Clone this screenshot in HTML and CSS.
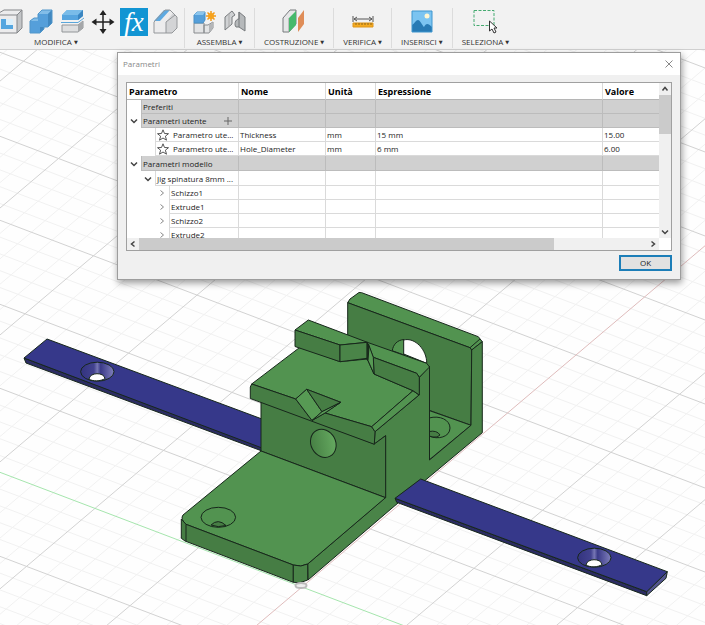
FILE: index.html
```html
<!DOCTYPE html>
<html lang="it">
<head>
<meta charset="utf-8">
<meta name="viewport" content="width=device-width, initial-scale=1">
<title>Parametri</title>
<link rel="stylesheet" href="styles.css">
</head>
<body>
<svg class="sprite" aria-hidden="true">
  <symbol id="down" viewBox="0 0 10 10"><path d="M2 3.5 5 6.5 8 3.5"/></symbol>
  <symbol id="up" viewBox="0 0 10 10"><path d="M2.500 6.500 5 3.500 7.500 6.500"/></symbol>
  <symbol id="right" viewBox="0 0 10 10"><path d="M3.500 2.500 6.500 5 3.500 7.500"/></symbol>
  <symbol id="left" viewBox="0 0 10 10"><path d="M6.500 2.500 3.500 5 6.500 7.500"/></symbol>
  <symbol id="star" viewBox="0 0 12 12"><path d="M6 .8 7.500 4.500 11.500 4.700 8.400 7.200 9.500 11.200 6 9 2.500 11.200 3.600 7.200 .5 4.700 4.500 4.500Z"/></symbol>
</svg>

<header class="toolbar">
  <section class="group first">
    <div class="icons">
      <button class="tool" aria-label="Svuota"><svg width="24" height="28" viewBox="4 0 24 28">
        <path d="M0 7 8 2H26V20L21 25H0Z" fill="#ececed"/><path d="M21 7 26 2V20L21 25Z" fill="#c3c5c7"/><path d="M5 11H17V21H5Z" fill="#fff"/><path d="M5 11H10V17H17V21H5Z" fill="#55a6df"/><path d="M10 11H17V17H10Z" fill="#dceffa"/>
        <path d="M0 7H21V25H0M21 7 26 2V20L21 25M3 5 8 2H26" fill="none" stroke="#85878a"/></svg></button>
      <button class="tool" aria-label="Combina"><svg width="28" height="28" viewBox="0 0 28 28">
        <path d="M3 13 7 10H11V6L15 2H25V15L21 19H17V21L13 25H3Z" fill="#559fda"/><path d="M11 6 15 2H25L21 6ZM3 13 7 10H11V13Z" fill="#82bde8"/><path d="M21 6 25 2V15L21 19ZM13 24V19H17V21Z" fill="#4188c0"/><path d="M3 13 7 10H11V6L15 2H25V15L21 19H17V21L13 25H3Z" fill="none" stroke="#5096ca"/></svg></button>
      <button class="tool" aria-label="Dividi corpo"><svg width="28" height="28" viewBox="0 0 28 28">
        <path d="M4 7 9 2H25V8L20 12H4Z" fill="#56a5df"/><path d="M4 7 9 2H25L20 7Z" fill="#79bce9"/><path d="M20 7 25 2V8L20 12Z" fill="#3a86c1"/><path d="M3 14.500H20L26 10" stroke="#5aa6da" fill="none"/><path d="M4 17H20L25 13V20L20 24H4Z" fill="#dedfe0" stroke="#929598"/><path d="M20 17 25 13V20L20 24Z" fill="#a5a7a9"/></svg></button>
      <button class="tool" aria-label="Sposta"><svg width="28" height="28" viewBox="0 0 28 28">
        <path d="M14 5V23M5 14H23" stroke="#222" stroke-width="1.500"/><path d="M14 2 10.500 7H17.500ZM14 26 10.500 21H17.500ZM2.500 14 7.500 10.500V17.500ZM25.500 14 20.500 10.500V17.500Z" fill="#222"/></svg></button>
      <button class="tool active" aria-label="Modifica parametri"><i>fx</i></button>
      <button class="tool" aria-label="Smusso"><svg width="28" height="28" viewBox="0 0 28 28">
        <path d="M3 14 14 2H19L26 9V20L21 25H3Z" fill="#ececed"/><path d="M15 14 22 5 26 9V20L21 25H15Z" fill="#d3d4d6"/><path d="M3 13 13 2H19L9 13Z" fill="#5ca9e1"/><path d="M3 14 14 2H19L26 9V20L21 25H3ZM15 25V14L24 7" fill="none" stroke="#94979a"/></svg></button>
    </div>
    <button class="menu">MODIFICA<span>▼</span></button>
  </section>
  <section class="group pair">
    <div class="icons">
      <button class="tool" aria-label="Nuovo componente"><svg width="28" height="28" viewBox="0 0 28 28">
        <path d="M4 15H14V25H4ZM14 17H18L23 14V20L19 25H14Z" fill="#e3e4e5" stroke="#888b8e"/><path d="M19 17 23 14V20L19 25Z" fill="#b4b6b8"/><path d="M4 7 7 4H15V12L13 15H4Z" fill="#559fda" stroke="#4a90c5"/><path d="M4 7 7 4H15L13 7Z" fill="#8bc5ed"/><path d="M21 3V13M16 8H26M17.500 4.500 24.500 11.500M24.500 4.500 17.500 11.500" stroke="#f49b18" stroke-width="1.500"/><circle cx="21" cy="8" r="3" fill="#f6a31e"/></svg></button>
      <button class="tool" aria-label="Giunto"><svg width="28" height="28" viewBox="0 0 28 28">
        <path d="M4 9 11 3 14 7 11 9V16L4 22Z" fill="#d0d2d4" stroke="#777a7d"/><path d="M8 6V19" stroke="#aaa"/><path d="M18 4 24 9V23L18 19H15C13 17 14 11 18 11Z" fill="#b6b9bb" stroke="#777a7d"/><path d="M18 4V19" stroke="#777a7d"/></svg></button>
    </div>
    <button class="menu">ASSEMBLA<span>▼</span></button>
  </section>
  <section class="group">
    <div class="icons">
      <button class="tool" aria-label="Piano di offset"><svg width="28" height="28" viewBox="0 0 28 28">
        <path d="M3 10 10 2H16V16L9 24H3Z" fill="#e6e7e8" stroke="#777a7d"/><path d="M9 10V24" fill="none" stroke="#999"/><path d="M9 10 16 3V17L9 24Z" fill="#46b96c"/><path d="M18 10 24 2V16L18 24Z" fill="#df8d58"/></svg></button>
    </div>
    <button class="menu">COSTRUZIONE<span>▼</span></button>
  </section>
  <section class="group">
    <div class="icons">
      <button class="tool" aria-label="Misura"><svg width="28" height="28" viewBox="0 0 28 28">
        <path d="M4 8V14M24 8V14M5 11H23M8 9 5 11 8 13M20 9 23 11 20 13" fill="none" stroke="#555"/><path d="M4 15H24V19H4Z" fill="#f5ab20" stroke="#dd951b"/><path d="M7 15V17M10 15V17M13 15V17M16 15V17M19 15V17M22 15V17" stroke="#8c651c"/></svg></button>
    </div>
    <button class="menu">VERIFICA<span>▼</span></button>
  </section>
  <section class="group">
    <div class="icons">
      <button class="tool" aria-label="Inserisci immagine"><svg width="28" height="28" viewBox="0 0 28 28">
        <path d="M4 3H24V24H4Z" fill="#7bc4f1"/><path d="M4 17C7 15 8 12 10 12S14 17 16 19C18 15 20 15 24 19V24H4Z" fill="#277ab4"/><circle cx="19" cy="8" r="2.500" fill="#fff6d2"/><path d="M4 3H24V24H4Z" fill="none" stroke="#3f96cf"/></svg></button>
    </div>
    <button class="menu">INSERISCI<span>▼</span></button>
  </section>
  <section class="group">
    <div class="icons">
      <button class="tool" aria-label="Seleziona"><svg width="28" height="28" viewBox="0 0 28 28">
        <path d="M3 2.500H23V17.500H3Z" fill="none" stroke="#45aa70" stroke-dasharray="3 1.500"/><path d="M18.500 13V23L21 21 23 25 25 24 23 20H26Z" fill="#fff" stroke="#333"/></svg></button>
    </div>
    <button class="menu">SELEZIONA<span>▼</span></button>
  </section>
</header>

<main class="workspace">
  <svg class="scene" viewBox="0 50 705 575" preserveAspectRatio="xMidYMin slice" role="img" aria-label="Modello 3D della dima">
    <defs>
      <linearGradient id="cone"><stop offset="0" stop-color="#33337f"/><stop offset=".4" stop-color="#42428f"/><stop offset=".5" stop-color="#7676b4"/><stop offset=".6" stop-color="#3a3a88"/><stop offset="1" stop-color="#8080bc"/></linearGradient>
      <linearGradient id="bore" x2="1" y2=".4"><stop offset="0" stop-color="#427a40"/><stop offset="1" stop-color="#63a65e"/></linearGradient>
    </defs>
    <g class="floor" transform="matrix(1.035 .393 .685 -.58 302 587)">
      <path id="minor" class="minor"/>
      <path id="major" class="major"/>
      <path class="axis-y" d="M-700 0H400"/>
      <path class="axis-x" d="M0-200V900"/>
    </g>

    <g class="edges">
      <path class="steel-dark" d="M24 358 26 363 262 451V447Z"/>
      <path class="steel" d="M47 339 262 419V448L24 358Z"/>
      <ellipse cx="97.300" cy="371.700" rx="16.700" ry="9.500" fill="url(#cone)"/>
      <path class="void" d="M89 379C90 372 104 372 105 378.500 101 381.500 92 381.500 89 379Z"/>

      <path class="top" d="M347.700 302.700 350 299 359 292.500 361.700 292.700 478.300 336.700 482.300 341.700 471.700 350 470 347.700Z"/>
      <path class="front" d="M347.700 302.700 470 347.700 471.700 350 471 425.300 347.700 381Z"/>
      <path class="top" d="M392.300 350.700C393 345 397 340 404 339.500V355Z"/>
      <path class="void" d="M403.700 340C415 337 427 350 426.700 363.300L403.700 354Z"/>
      <path class="top" d="M429 410.500 471 425.300 429 460Z"/>
      <path class="top" d="M429 418C440 415 450 420 450 428 450 437 438 440 429 436Z"/>
      <path class="front" d="M429 431.500Q437 430 440 435L437 437Q433 437.500 429 436Z"/>

      <path class="side" d="M375 431.700 419 395 419.300 377.300 429.500 366V460L471 425.300 471.700 350 482.300 341.700V432.700L398 503 308 580 307.700 564 385.500 497.500V435.700L374.300 444Z"/>
      <path class="outline" d="M470 347.700 480 339"/>

      <path class="front" d="M261 400 374.300 444 385.700 435.700V497.700L261 451Z"/>
      <ellipse cx="323.300" cy="443.300" rx="12.300" ry="14.500" transform="rotate(-28 323.300 443.300)" fill="url(#bore)"/>
      <path class="top" d="M300.700 346.700 251.700 384 295.700 399 306.700 389.300 340.700 402.300 325 413 371.700 426.700 413 390.700 374 374 367.300 359 340 361.700Z"/>
      <path class="front" d="M251.700 384 295.700 399 312 420.500 325 413 371.700 426.700 375 431.700 374.300 444.300 250.300 398.500V387Z"/>
      <path class="top" d="M371.700 426.700 413 390.700 419 395 375 431.700Z"/>
      <path class="facet" d="M295.700 399 306.700 389.300 322 411.700 312 420.500Z"/>
      <path class="front" d="M306.700 389.300 340.700 402.300 322 411.700Z"/>
      <path class="facet" d="M312 420.500 322 411.700 340.700 402.300 325 413Z"/>

      <path class="top" d="M308.300 320 295 330 340 345 367.300 342.300Z"/>
      <path class="front" d="M295 330 340 345V361.700L295 346.500Z"/>
      <path class="side" d="M340 345 367.300 342.300V358.300L340 361.700Z"/>
      <path class="top" d="M367.300 342.300 426.700 363.300 429.500 367 419.300 377.300 416.700 373.300 373.300 357.300Z"/>
      <path class="front" d="M373.300 357.300 416.700 373.300 419.300 377.300V395L413 390.700 374 374Z"/>
      <path class="facet" d="M368.500 344 373.300 357.300 374 374 367.300 359Z"/>
      <path class="shadow" d="M367 342.500 369 347 368 360H367Z"/>

      <path class="top" d="M261 451 183 515Q180 519 186 524.300L293.300 565Q301 567.500 307.700 564L385.500 497.700Z"/>
      <path class="front" d="M181.300 519V538.300L185 541 293.300 582.300V565L186 524.300Z"/>
      <path class="outline" d="M186 524.300V541"/>
      <path class="side" d="M293.300 565Q301 567.500 307.700 564V580L300 582.700 293.300 582.300Z"/>
      <ellipse class="top" cx="218.300" cy="517.300" rx="17.300" ry="10"/>
      <path class="front" d="M211 525Q218 518 226 525.500 218 528 211 525Z"/>

      <path class="steel-dark" d="M395 498.300 396.700 502.300 646.700 595.700V591.700Z"/>
      <path class="steel-end" d="M667.300 571.700 666 578.300 646.700 595.700V591.700Z"/>
      <path class="steel" d="M420.700 479 667.300 571.700 646.700 591.700 395 498.300Z"/>
      <ellipse cx="594.300" cy="557.700" rx="16.700" ry="9.500" fill="url(#cone)"/>
      <path class="void" d="M586 565C587 558 601 558 602 564.500 598 567.500 590 567.500 586 565Z"/>
    </g>
    <ellipse class="origin" cx="301" cy="585.500" rx="5.500" ry="2.500"/>
  </svg>

  <section class="dialog" role="dialog" aria-labelledby="dialog-title">
    <div class="titlebar">
      <h1 id="dialog-title">Parametri</h1>
      <button class="close" aria-label="Chiudi"><svg width="10" height="10" viewBox="0 0 10 10"><path d="M1.500 1.500 8.500 8.500M8.500 1.500 1.500 8.500"/></svg></button>
    </div>
    <div class="content">
      <div class="pane">
        <div class="view">
          <table>
            <colgroup><col class="c-param"><col class="c-name"><col class="c-unit"><col class="c-expr"><col></colgroup>
            <thead><tr><th>Parametro</th><th>Nome</th><th>Unità</th><th>Espressione</th><th>Valore</th></tr></thead>
            <tbody>
              <tr class="band"><td><div class="tree"><span class="twist"></span><span class="label">Preferiti</span></div></td><td></td><td></td><td></td><td></td></tr>
              <tr class="band"><td><div class="tree"><button class="twist" aria-label="Comprimi"><svg><use href="#down"/></svg></button><span class="label">Parametri utente</span><button class="add" aria-label="Aggiungi parametro"><svg width="10" height="10" viewBox="0 0 10 10"><path d="M5 1V9M1 5H9"/></svg></button></div></td><td></td><td></td><td></td><td></td></tr>
              <tr><td><div class="tree level1"><span class="twist"></span><span class="label"><svg class="star"><use href="#star"/></svg>Parametro ute...</span></div></td><td>Thickness</td><td>mm</td><td>15 mm</td><td>15.00</td></tr>
              <tr><td><div class="tree level1"><span class="twist"></span><span class="label"><svg class="star"><use href="#star"/></svg>Parametro ute...</span></div></td><td>Hole_Diameter</td><td>mm</td><td>6 mm</td><td>6.00</td></tr>
              <tr class="band tall"><td><div class="tree"><button class="twist" aria-label="Comprimi"><svg><use href="#down"/></svg></button><span class="label">Parametri modello</span></div></td><td></td><td></td><td></td><td></td></tr>
              <tr class="tall"><td><div class="tree level1"><button class="twist" aria-label="Comprimi"><svg><use href="#down"/></svg></button><span class="label">Jig spinatura 8mm ...</span></div></td><td></td><td></td><td></td><td></td></tr>
              <tr><td><div class="tree level2"><button class="twist" aria-label="Espandi"><svg><use href="#right"/></svg></button><span class="label">Schizzo1</span></div></td><td></td><td></td><td></td><td></td></tr>
              <tr><td><div class="tree level2"><button class="twist" aria-label="Espandi"><svg><use href="#right"/></svg></button><span class="label">Extrude1</span></div></td><td></td><td></td><td></td><td></td></tr>
              <tr><td><div class="tree level2"><button class="twist" aria-label="Espandi"><svg><use href="#right"/></svg></button><span class="label">Schizzo2</span></div></td><td></td><td></td><td></td><td></td></tr>
              <tr><td><div class="tree level2"><button class="twist" aria-label="Espandi"><svg><use href="#right"/></svg></button><span class="label">Extrude2</span></div></td><td></td><td></td><td></td><td></td></tr>
            </tbody>
          </table>
        </div>
        <div class="bar vertical">
          <button aria-label="Scorri su"><svg><use href="#up"/></svg></button><span class="thumb"></span><button class="end" aria-label="Scorri giù"><svg><use href="#down"/></svg></button>
        </div>
        <div class="bar horizontal">
          <button aria-label="Scorri a sinistra"><svg><use href="#left"/></svg></button><span class="thumb"></span><button class="end" aria-label="Scorri a destra"><svg><use href="#right"/></svg></button>
        </div>
      </div>
      <button class="ok">OK</button>
    </div>
  </section>
</main>
<script src="grid.js"></script>
</body>
</html>
```
FILE: grid.js
```js
// Ground plane: one major line every 100 units, five subdivisions between them.
function gridPath(keep) {
  let d = "";
  for (let u = -700; u <= 400; u += 20) if (keep(u)) d += `M${u} -200V900`;
  for (let v = -200; v <= 900; v += 20) if (keep(v)) d += `M-700 ${v}H400`;
  return d;
}
document.getElementById("minor").setAttribute("d", gridPath(n => n % 100 !== 0));
document.getElementById("major").setAttribute("d", gridPath(n => n % 100 === 0 && n !== 0));
```
FILE: styles.css
```css
* { box-sizing: border-box; }

body {
  margin: 0;
  height: 100vh;
  display: flex;
  flex-direction: column;
  overflow: hidden;
  font: 8px/14px "Open Sans", "Noto Sans", sans-serif;
  color: #1c1c1c;
  background: #fefefe;
}

button {
  margin: 0;
  padding: 0;
  border: 0;
  background: none;
  font: inherit;
  color: inherit;
}

svg { display: block; flex: none; }
.sprite { position: absolute; width: 0; height: 0; }

/* Toolbar */
.toolbar {
  display: flex;
  padding: 8px 0 1px;
  background: #f2f2f2;
  border-bottom: 1px solid #d0d0d0;
}

.group {
  display: flex;
  flex-direction: column;
  align-items: center;
  padding: 0 9px;
  border-right: 1px solid #dcdcdc;
}
.group:last-child { border-right: 0; }
.group.first { align-items: flex-start; padding: 0 5px 0 0; }
.group.pair { padding: 0 5px; }
.first .menu { margin-left: 34px; }

.icons { display: flex; gap: 3px; }
.tool { height: 28px; }
.active {
  width: 28px;
  background: #1295d3;
  color: #fff;
  font: 27px/24px "Liberation Serif", serif;
}

.menu { height: 12px; line-height: 12px; white-space: nowrap; color: #333; }
.menu span { margin-left: 2px; font-family: "DejaVu Sans", sans-serif; font-size: 5px; vertical-align: 1px; }

/* Modelling canvas */
.workspace { position: relative; flex: 1; min-height: 0; }
.scene { position: absolute; inset: 0; width: 100%; height: 100%; }
.floor path { fill: none; stroke-width: 1px; vector-effect: non-scaling-stroke; }
.minor { stroke: #f1f1f1; }
.major { stroke: #d2d2d2; }
.axis-x { stroke: #dfbcbc; }
.axis-y { stroke: #a5e5ad; }
.edges { stroke: #17271b; stroke-width: 1; stroke-linejoin: round; }
.top { fill: #529350; }
.front { fill: #467d44; }
.side { fill: #4a8448; }
.facet { fill: #579a54; }
.shadow { fill: #1d321c; }
.steel { fill: #36388a; }
.steel-dark { fill: #2b2c62; }
.steel-end { fill: #54558e; }
.void { fill: #fefefe; }
.outline { fill: none; }
.origin { fill: #eee; stroke: #bbb; stroke-width: 2; }

/* Parameters window */
.dialog {
  position: absolute;
  top: 2px;
  left: 117px;
  width: 80%;
  border: 1px solid #9d9d9d;
  background: #f0f0f0;
  box-shadow: 1px 3px 7px rgba(0, 0, 0, .4);
}
.titlebar {
  display: flex;
  justify-content: space-between;
  align-items: center;
  height: 22px;
  padding: 0 6px 0 5px;
  background: #fff;
}
.titlebar h1 { margin: 0; font-size: 8px; font-weight: 400; color: #888; }
.close svg { fill: none; stroke: #888; }

.content {
  display: flex;
  flex-direction: column;
  gap: 4px;
  padding: 7px 8px 8px;
}
.pane {
  display: grid;
  grid-template-columns: 1fr 12px;
  grid-template-rows: 155px 12px;
  border: 1px solid #a0a0a0;
  background: #fff;
}
.view { overflow: hidden; }

table {
  width: 100%;
  table-layout: fixed;
  border-collapse: separate;
  border-spacing: 0;
}
.c-param { width: 112px; }
.c-name { width: 87px; }
.c-unit { width: 50px; }
.c-expr { width: 227px; }

th, td {
  height: 14px;
  padding: 0 1px;
  border: 0 solid #dadada;
  border-width: 0 1px 1px 0;
  line-height: 13px;
  text-align: left;
  white-space: nowrap;
}
th {
  height: 17px;
  padding: 0 2px;
  font-size: 9px;
  color: #000;
  border-bottom-color: #b5b5b5;
}
th:last-child, td:last-child { border-right: 0; }
td:first-child { padding: 0; border-bottom: 0; }
.band td { background: #d0d0d0; border-color: #bcbcbc; }
.band td:first-child { background: #fff; }

.tree { display: flex; height: 14px; }
.tall td, .tall .tree { height: 15px; }
.band .tree { background: #d0d0d0; }
.level1 { padding-left: 14px; }
.level2 { padding-left: 28px; }
.twist { width: 14px; height: 100%; display: flex; align-items: center; justify-content: center; background: #fff; }
.twist svg, .bar svg { width: 10px; height: 10px; fill: none; stroke: #444; stroke-width: 1.5px; }
.level2 .twist svg { stroke: #888; stroke-width: 1px; }
.label {
  flex: 1;
  display: flex;
  align-items: center;
  gap: 4px;
  padding-left: 1px;
  border: 0 solid #dadada;
  border-width: 0 0 1px 1px;
}
.band .label { border-color: #bcbcbc; }
.star { width: 12px; height: 12px; fill: none; stroke: #555; }
.add { padding: 0 5px; border-bottom: 1px solid #bcbcbc; }
.add svg { stroke: #666; }

.bar { display: flex; background: #f0f0f0; }
.bar button { display: flex; align-items: center; justify-content: center; width: 12px; height: 12px; }
.thumb { background: #cbcbcb; }
.end { margin-left: auto; }
.vertical { flex-direction: column; }
.vertical .thumb { height: 25%; }
.vertical .end { margin: auto 0 0; }
.horizontal .thumb { width: 78%; }

.ok {
  align-self: flex-end;
  width: 53px;
  height: 16px;
  border: 2px solid #1c7eb8;
  background: #e1e1e1;
  line-height: 12px;
}
```
